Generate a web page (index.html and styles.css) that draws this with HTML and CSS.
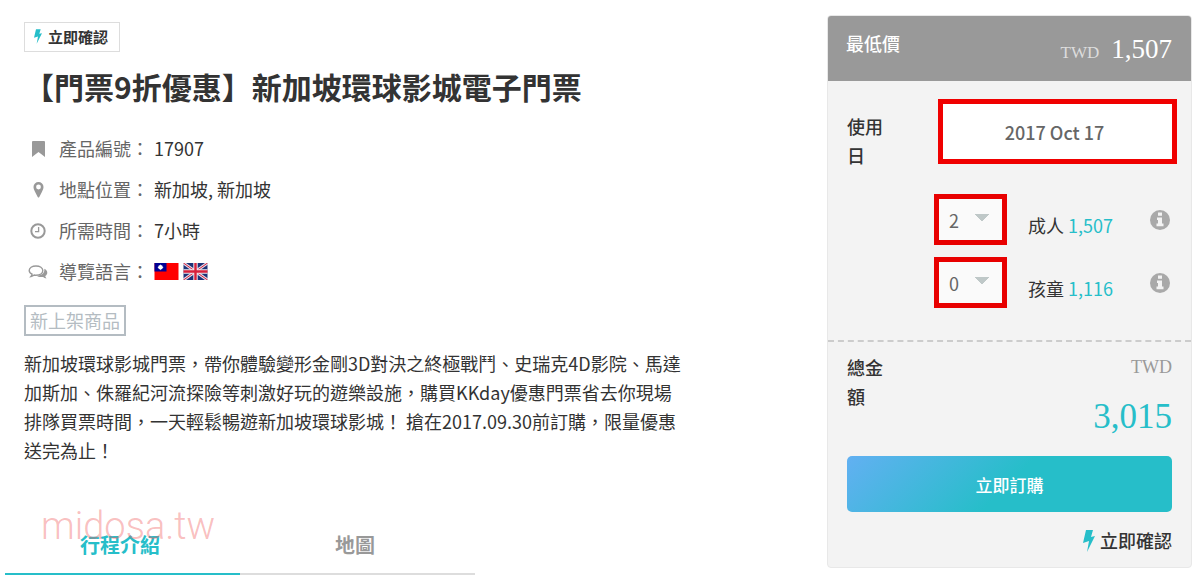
FILE: index.html
```html
<!DOCTYPE html>
<html lang="zh-Hant">
<head>
    <meta charset="UTF-8">
    <meta name="viewport" content="width=device-width, initial-scale=1.0">
    <title>【門票9折優惠】新加坡環球影城電子門票</title>
    <link rel="stylesheet" href="styles.css">
</head>
<body>
    <svg class="sprite" aria-hidden="true">
        <symbol id="bolt" viewBox="0 0 12 22">
            <path d="M3 0h7L8 7l4-1L4 22l2-11-6 2z"/>
        </symbol>
        <symbol id="info" viewBox="0 0 20 20">
            <circle cx="10" cy="10" r="10" fill="#a9a9a9"/>
            <path d="M8 2.500h4v3.300H8zM7 7.500h5v6h1.500v2.700h-7v-2.700H8V10H7z" fill="#f3f3f3"/>
        </symbol>
    </svg>

    <div class="page">
        <main class="product">
            <div class="product-info">
                <div class="badge"><svg class="badge-icon"><use href="#bolt"/></svg>立即確認</div>
                <h1>【門票9折優惠】新加坡環球影城電子門票</h1>

                <ul class="meta">
                    <li>
                        <svg class="meta-icon" viewBox="0 0 20 20"><path d="M4 3q0-1 1-1h11q1 0 1 1v15l-6.500-5L4 18z"/></svg>
                        <span class="meta-name">產品編號：</span>17907
                    </li>
                    <li>
                        <svg class="meta-icon" viewBox="0 0 20 20"><path fill-rule="evenodd" d="M10.500 2a5 5 0 0 1 5 5c0 2-.8 3.200-1.500 4.700L11.300 17q-.8 1-1.600 0L7 11.700C6.300 10.200 5.500 9 5.500 7a5 5 0 0 1 5-5zm0 2.600a2.400 2.400 0 1 0 0 4.800 2.400 2.400 0 0 0 0-4.800z"/></svg>
                        <span class="meta-name">地點位置：</span>新加坡, 新加坡
                    </li>
                    <li>
                        <svg class="meta-icon line" viewBox="0 0 20 20"><circle cx="10" cy="10" r="6.700" stroke-width="2"/><path d="M10.600 6v4.700H7" stroke-width="1.300"/></svg>
                        <span class="meta-name">所需時間：</span>7小時
                    </li>
                    <li>
                        <svg class="meta-icon" viewBox="0 0 20 20">
                            <path class="bubble" d="M8 4c4 0 6.800 2 6.800 4.600S12 13.200 8 13.200q-1 0-1.800-.2-1.400 1.200-3.200 1.500.9-1 1.100-2.300C2.200 11.400 1.200 10 1.200 8.600 1.200 6 4 4 8 4z"/>
                            <path d="M16.300 6.800c4 2 3.600 5.500.9 7.300q.3 1.200 1.300 2.300-2.200-.3-3.400-1.500c-3 .5-5 0-6.500-1.100 4.500 0 8.400-2.300 7.700-7z"/>
                        </svg>
                        <span class="meta-name">導覽語言：</span>
                        <svg class="flag" viewBox="0 0 24 17" role="img" aria-label="中文">
                            <path fill="#f00" d="M0 0h24v17H0z"/>
                            <path fill="#000094" d="M0 0h12v8.500H0z"/>
                            <circle cx="6" cy="4.300" r="2.300" fill="#fff"/>
                            <path d="M6 1.500v5.600M3.200 4.300h5.600" stroke="#fff" stroke-width=".6"/>
                        </svg>
                        <svg class="flag" viewBox="0 0 24 17" role="img" aria-label="English">
                            <path fill="#1c3277" d="M0 0h24v17H0z"/>
                            <path d="M0 0l24 17M24 0L0 17" stroke="#e4dcea" stroke-width="3"/>
                            <path d="M0 0l24 17M24 0L0 17" stroke="#d8213b" stroke-width="1"/>
                            <path d="M12 0v17M0 8.500h24" stroke="#f0e6ee" stroke-width="4.400"/>
                            <path d="M12 0v17M0 8.500h24" stroke="#d8213b" stroke-width="2.400"/>
                        </svg>
                    </li>
                </ul>

                <div class="tag">新上架商品</div>
                <p class="description">新加坡環球影城門票，帶你體驗變形金剛3D對決之終極戰鬥、史瑞克4D影院、馬達加斯加、侏羅紀河流探險等刺激好玩的遊樂設施，購買KKday優惠門票省去你現場排隊買票時間，一天輕鬆暢遊新加坡環球影城！ 搶在2017.09.30前訂購，限量優惠送完為止！</p>
            </div>

            <nav class="tabs">
                <a class="tab active" href="#intro">行程介紹</a>
                <a class="tab" href="#map">地圖</a>
                <span class="watermark">midosa.tw</span>
            </nav>
        </main>

        <aside class="booking">
            <div class="booking-head">
                <div class="lowest">最低價</div>
                <div class="price"><span class="currency">TWD</span>1,507</div>
            </div>

            <form class="options">
                <div class="date-row">
                    <label class="side-label" for="date">使用日</label>
                    <input class="date" id="date" type="text" value="2017 Oct 17" readonly>
                </div>
                <div class="guests">
                    <div class="guest">
                        <select class="count" id="adult">
                            <option>0</option>
                            <option>1</option>
                            <option selected>2</option>
                        </select>
                        <label class="guest-name" for="adult">成人 <span class="guest-price">1,507</span></label>
                        <svg class="info"><use href="#info"/></svg>
                    </div>
                    <div class="guest">
                        <select class="count" id="child">
                            <option selected>0</option>
                            <option>1</option>
                            <option>2</option>
                        </select>
                        <label class="guest-name" for="child">孩童 <span class="guest-price">1,116</span></label>
                        <svg class="info"><use href="#info"/></svg>
                    </div>
                </div>
            </form>

            <div class="summary">
                <div class="total">
                    <div class="side-label">總金額</div>
                    <div class="total-price">
                        <div class="total-currency">TWD</div>
                        <div class="total-amount">3,015</div>
                    </div>
                </div>
                <button class="order" type="button">立即訂購</button>
                <div class="instant"><svg class="instant-icon"><use href="#bolt"/></svg>立即確認</div>
            </div>
        </aside>
    </div>
</body>
</html>
```

FILE: styles.css
```css
* {
    box-sizing: border-box;
}

body {
    margin: 0;
    background-color: #fff;
    color: #333;
    font-family: "Noto Sans CJK TC", sans-serif;
    font-size: 18px;
    line-height: 29px;
}

.sprite {
    display: none;
}

.page {
    display: grid;
    grid-template-columns: minmax(0, 705fr) minmax(0, 365fr);
    column-gap: 117px;
    align-items: start;
    padding: 0 8px 0 5px;
}

.product-info {
    padding: 22px 24px 0 19px;
}

.badge {
    display: flex;
    align-items: center;
    width: fit-content;
    height: 30px;
    padding: 0 11px 2px 9px;
    border: 1px solid #ddd;
    font-size: 15px;
    font-weight: bold;
}

.badge-icon {
    width: 8px;
    height: 15px;
    margin-right: 6px;
    fill: #26bec9;
}

h1 {
    margin: 12px 0 20px;
    font-size: 30px;
    line-height: 44px;
}

.meta {
    margin: 0;
    padding: 0;
    list-style: none;
}

.meta li {
    display: flex;
    align-items: center;
    height: 41px;
}

.meta-icon {
    width: 20px;
    height: 20px;
    margin: 0 11px 0 4px;
    fill: #999;
}

.meta-icon.line {
    fill: none;
    stroke: #999;
}

.bubble {
    fill: none;
    stroke: #999;
    stroke-width: 1.4;
}

.meta-name {
    margin-right: 5px;
    color: #666;
}

.flag {
    width: 25px;
    height: 17px;
    margin-right: 4px;
}

.tag {
    width: fit-content;
    margin: 13px 0;
    padding: 0 4px;
    border: 2px solid #b4bcc2;
    color: #b4bcc2;
    line-height: 27px;
}

.description {
    margin: 0;
}

.tabs {
    position: relative;
    display: grid;
    grid-template-columns: repeat(3, 1fr);
    margin-top: 55px;
}

.tab {
    padding: 10px 5px 14px 0;
    border-bottom: 2px solid #ddd;
    color: #999;
    font-size: 20px;
    font-weight: bold;
    text-align: center;
    text-decoration: none;
}

.tab.active {
    border-color: #26bec9;
    color: #26bec9;
}

/* site mark lies over the first tab */
.watermark {
    position: absolute;
    left: 36px;
    top: -18px;
    color: rgba(240, 90, 90, 0.4);
    font-family: Roboto, sans-serif;
    font-size: 38px;
    font-weight: 300;
    line-height: 48px;
    pointer-events: none;
}

.booking {
    margin-top: 15px;
    border: 1px solid #e8e8e8;
    border-radius: 4px;
    background-color: #f3f3f3;
    overflow: hidden;
}

.booking-head {
    display: flex;
    justify-content: space-between;
    padding: 13px 19px 12px 18px;
    background-color: #999;
    color: #fff;
}

.lowest {
    font-weight: 500;
}

.price {
    font-family: "Liberation Serif", serif;
    font-size: 27px;
    line-height: 40px;
}

.currency {
    margin-right: 12px;
    color: #ddd;
    font-size: 17px;
    line-height: 20px;
}

.options {
    padding: 18px 14px 32px 19px;
    border-bottom: 2px dashed #ccc;
}

.date-row {
    display: flex;
    justify-content: space-between;
}

.side-label {
    width: 40px;
    font-weight: 500;
}

.date-row .side-label {
    margin-top: 13px;
}

.date {
    width: 239px;
    height: 65px;
    padding: 0 6px 0 0;
    border: 5px solid #f00000;
    background-color: #fff;
    color: #666;
    font-family: inherit;
    font-size: 18px;
    font-weight: 500;
    text-align: center;
}

.guests {
    display: grid;
    row-gap: 12px;
    margin-top: 24px;
    padding: 0 7px 0 87px;
}

.guest {
    display: flex;
    align-items: center;
}

.count {
    width: 73px;
    height: 51px;
    padding: 0 10px;
    appearance: none;
    border: 5px solid #e80000;
    border-radius: 0;
    background: #fafafa conic-gradient(from -41deg at 50% 100%, #bfc8c8 82deg, transparent 0) no-repeat 36px 15px / 14px 8px;
    color: #666;
    font-family: inherit;
    font-size: 18px;
}

.guest-name {
    margin: 12px auto 0 21px;
}

.guest-price {
    color: #26bec9;
}

.info {
    width: 20px;
    height: 20px;
}

.summary {
    padding: 11px 19px 12px;
}

.total {
    display: flex;
    justify-content: space-between;
}

.total-price {
    color: #26bec9;
    font-family: "Liberation Serif", serif;
    text-align: right;
}

.total-currency {
    color: #999;
}

.total-amount {
    margin: 10px 0 14px;
    font-size: 35px;
    line-height: 50px;
}

.order {
    display: block;
    width: 100%;
    height: 56px;
    border: none;
    border-radius: 5px;
    background: linear-gradient(135deg, #62b0f2 0%, #26bec9 50%);
    color: #fff;
    font-family: inherit;
    font-size: 17px;
    font-weight: 500;
    cursor: pointer;
}

.instant {
    display: flex;
    justify-content: flex-end;
    align-items: center;
    margin-top: 14px;
    font-weight: 500;
}

.instant-icon {
    width: 12px;
    height: 22px;
    margin-right: 5px;
    fill: #26bec9;
}
```
